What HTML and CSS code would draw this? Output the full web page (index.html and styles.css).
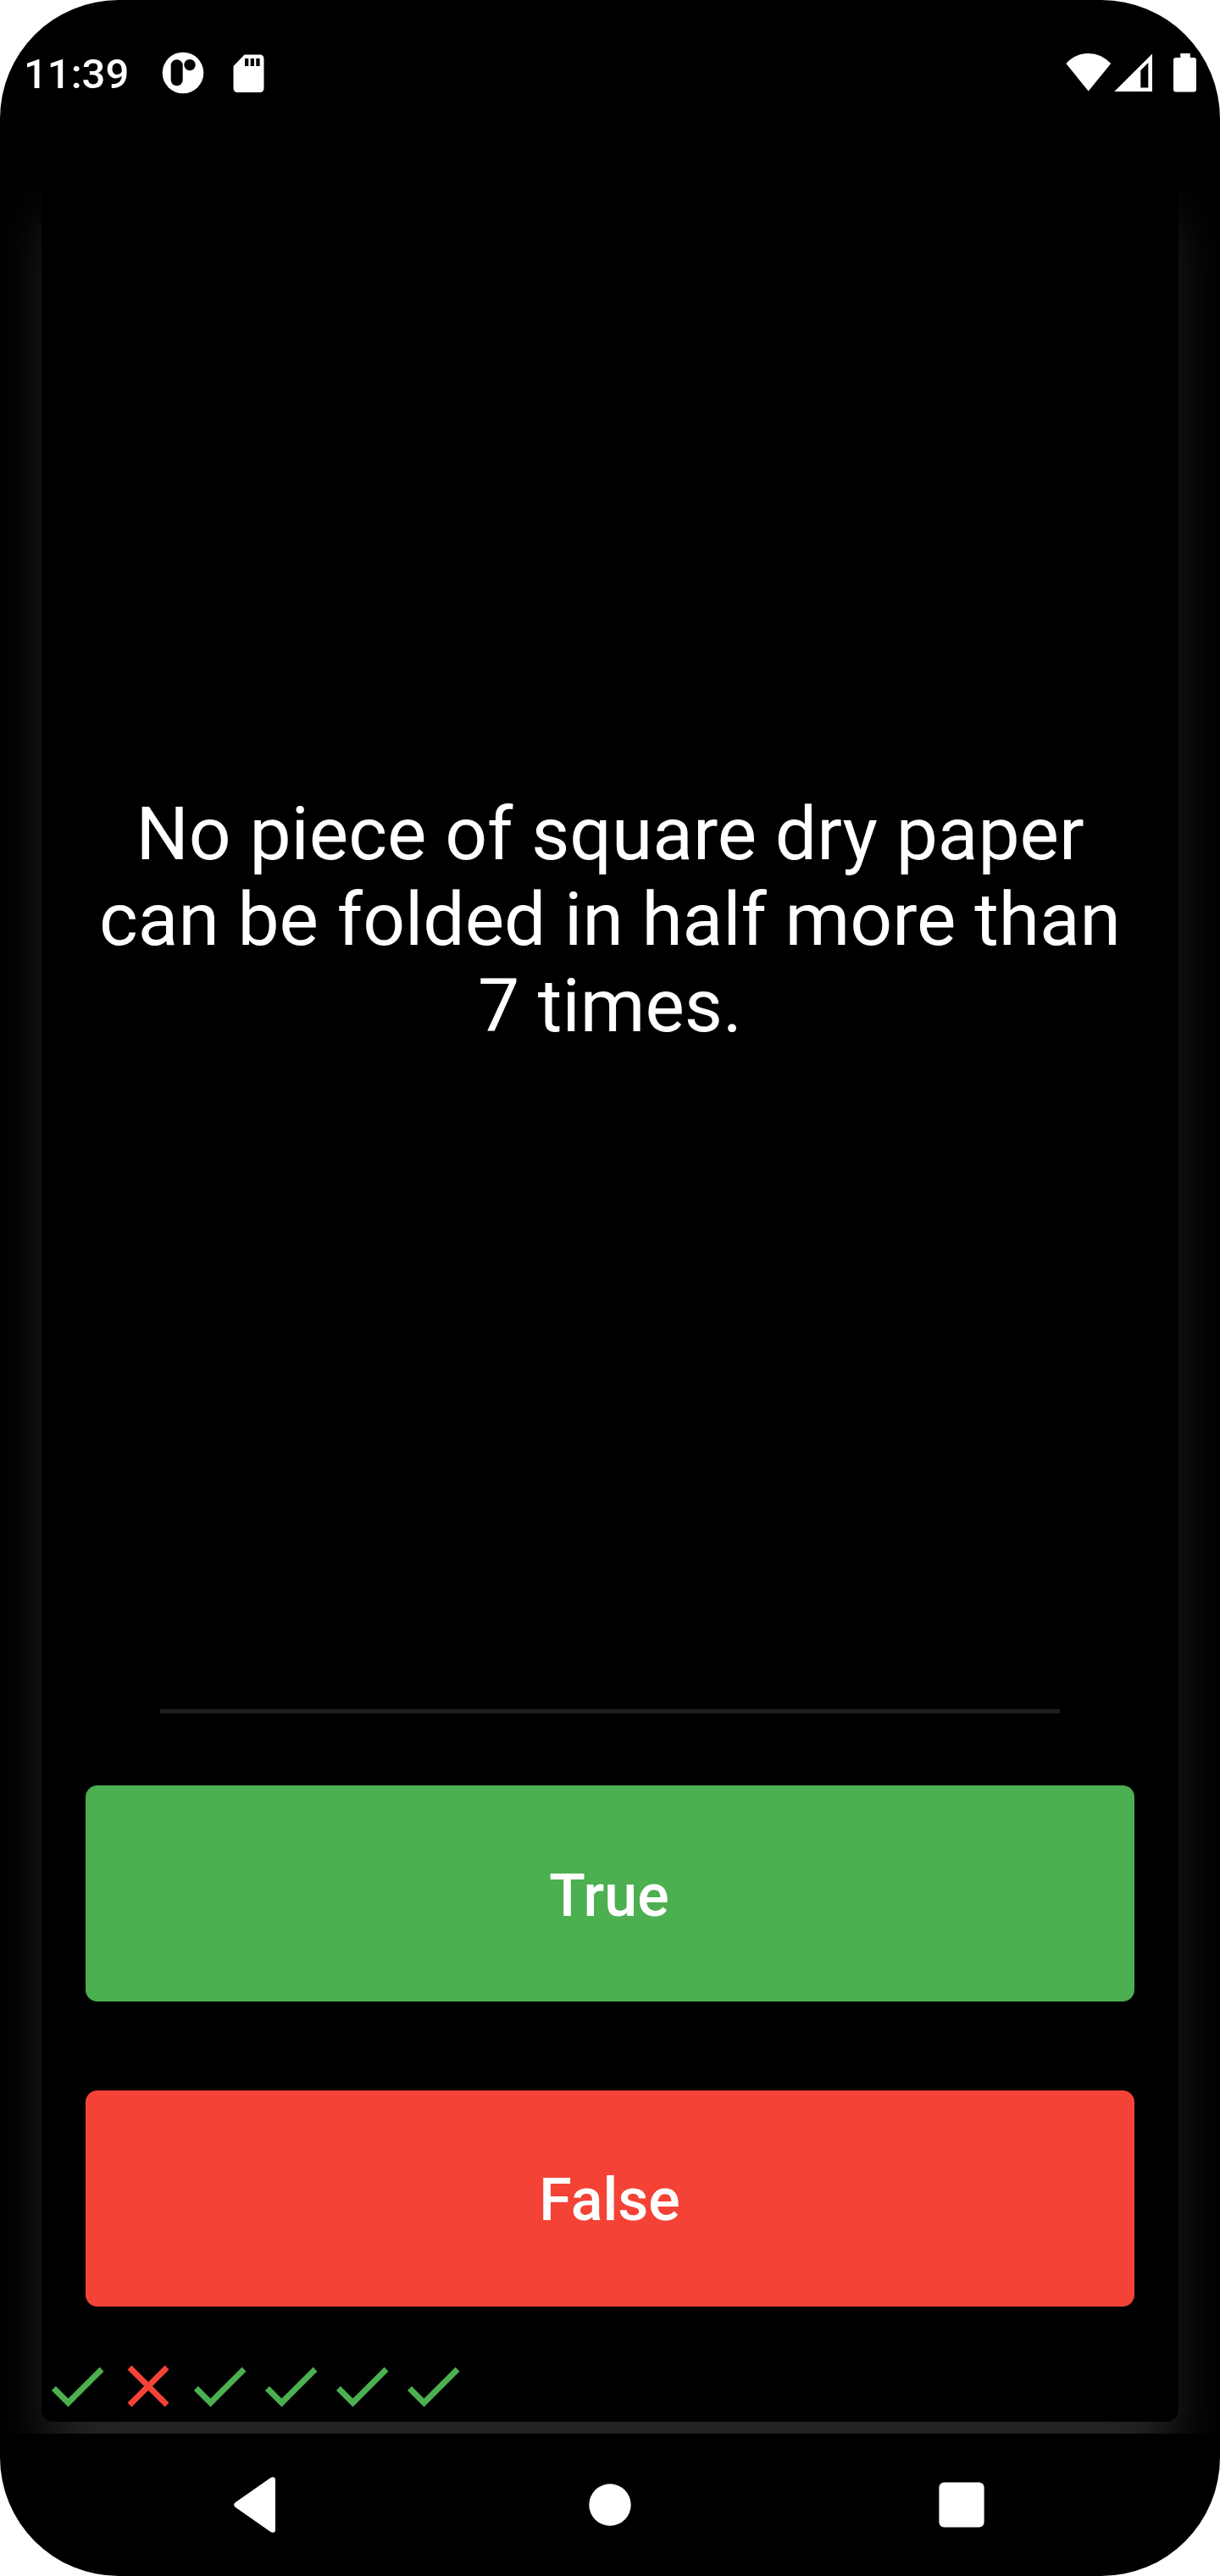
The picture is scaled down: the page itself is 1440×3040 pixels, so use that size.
FILE: index.html
```html
<!DOCTYPE html>
<html lang="en">
<head>
<meta charset="utf-8">
<title>Quiz</title>
<link rel="stylesheet" href="styles.css">
</head>
<body>
<svg class="defs" width="0" height="0">
  <symbol id="check" viewBox="0 0 24 24"><path fill="#4caf50" d="M9 16.17 4.83 12l-1.42 1.41L9 19 21 7l-1.41-1.41z"/></symbol>
  <symbol id="close" viewBox="0 0 24 24"><path fill="#f44336" d="M19 6.41 17.59 5 12 10.59 6.41 5 5 6.41 10.59 12 5 17.59 6.41 19 12 13.41 17.59 19 19 17.59 13.41 12z"/></symbol>
</svg>
<div class="phone">
  <header class="status">
    <span class="clock">11:39</span>
    <svg class="app" width="50" height="50" viewBox="0 0 50 50"><circle cx="25" cy="25" r="24.3" fill="#fff"/><rect x="10.7" y="9.3" width="14" height="31" rx="7"/><circle cx="33" cy="15.6" r="6.7"/></svg>
    <svg class="sd" width="37" height="46" viewBox="0 0 37 46"><path fill="#fff" d="M13.5.5H32a4.500 4.500 0 0 1 4.500 4.500V40.500a4.500 4.500 0 0 1-4.500 4.500H5A4.500 4.500 0 0 1 .5 40.500V14z"/><path d="M14 5h4.300v9H14zM20.700 5H25v9h-4.300zM27.300 5h4.300v9h-4.300z"/></svg>
    <svg class="signals" width="156" height="48" viewBox="0 0 156 48"><g fill="#fff"><path d="M.3 13Q11.500 1 26.700 1T53.200 13L26.700 45.500z"/><path fill-rule="evenodd" d="M57.300 46 102 1.500V46zM88.300 21V41.500h9V12z"/><path d="M135.300 1h11.500v5H151a3 3 0 0 1 3 3V43.500a3 3 0 0 1-3 3H130a3 3 0 0 1-3-3V9a3 3 0 0 1 3-3h5.300z"/></g></svg>
  </header>
  <main class="body">
    <section class="card">
      <p class="question">No piece of square dry paper can be folded in half more than 7 times.</p>
      <hr class="rule">
      <div class="answers">
        <button class="answer yes">True</button>
        <button class="answer no">False</button>
      </div>
      <div class="score">
        <svg class="mark"><use href="#check"/></svg>
        <svg class="mark"><use href="#close"/></svg>
        <svg class="mark"><use href="#check"/></svg>
        <svg class="mark"><use href="#check"/></svg>
        <svg class="mark"><use href="#check"/></svg>
        <svg class="mark"><use href="#check"/></svg>
      </div>
    </section>
  </main>
  <nav class="nav">
    <svg class="back" width="50" height="66" viewBox="0 0 50 66"><path fill="#fff" d="M43.500.9Q49 -1.500 49 4V62Q49 67.500 43.500 65.100L2 36Q-1.800 33 2 30z"/></svg>
    <svg class="home" width="50" height="50" viewBox="0 0 50 50"><circle cx="25" cy="25" r="24.700" fill="#fff"/></svg>
    <svg class="recent" width="54" height="54" viewBox="0 0 54 54"><rect x=".4" y=".4" width="53.200" height="53.200" rx="6" fill="#fff"/></svg>
  </nav>
</div>
</body>
</html>
```
FILE: styles.css
```css
* { box-sizing: border-box; }
body { margin: 0; background: #fff; font-family: Roboto, sans-serif; color: #fff; }
.defs { display: block; }
.phone {
  width: 1440px;
  height: 3040px;
  display: flex;
  flex-direction: column;
  background: #000;
  border-radius: 140px;
  overflow: hidden;
}
.status {
  height: 178px;
  display: flex;
  align-items: flex-start;
  padding: 61px 26px 0 28px;
}
.clock { font-size: 49px; font-weight: 500; line-height: 54px; width: 163px; white-space: nowrap; }
.sd { margin: 3px 0 0 34px; }
.signals { margin: 1px 0 0 auto; }
.body { height: 2694px; padding: 14px 49px; overflow: hidden; }
.card {
  height: 2666px;
  border-radius: 14px;
  background: #000;
  box-shadow: 0 56px 66px -8px #272727;
  display: flex;
  flex-direction: column;
}
.question {
  margin: 0;
  flex: 1;
  display: flex;
  align-items: center;
  justify-content: center;
  padding: 0 50px 37px;
  text-align: center;
  font-size: 87.5px;
  line-height: 101.3px;
}
.rule { width: 1062px; height: 5px; margin: 0 auto; border: 0; background: #1f1f1f; }
.answers { padding: 85px 52px 0; display: flex; flex-direction: column; gap: 105px; }
.answer {
  height: 255px;
  border: 0;
  padding: 4px 2px 0 0;
  border-radius: 14px;
  color: #fff;
  font: 500 70px/82px Roboto, sans-serif;
}
.yes { background: #4caf50; }
.no { background: #f44336; padding: 3px 1px 0 0; }
.score { height: 136px; padding: 52px 0 0; display: flex; }
.mark { width: 84px; height: 84px; flex: none; }
.nav {
  height: 168px;
  display: flex;
  align-items: center;
  padding-left: 276px;
}
.home { margin-left: 369px; }
.recent { margin-left: 363px; }
```
